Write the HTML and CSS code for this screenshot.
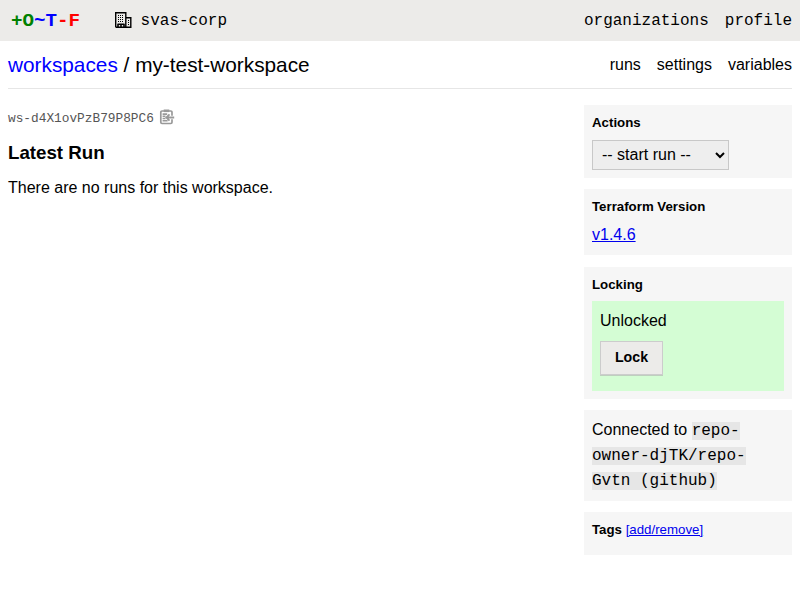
FILE: index.html
```html
<!DOCTYPE html>
<html lang="en">
<head>
<meta charset="utf-8">
<title>my-test-workspace</title>
<link rel="stylesheet" href="styles.css">
</head>
<body>
<header class="topbar">
  <a class="logo"><span class="green">+O</span><span class="blue">~T</span><span class="red">-F</span></a>
  <a class="org">
    <svg class="org-icon" width="17" height="16" viewBox="0 0 17 16" fill="none" stroke="#000">
      <path stroke-width="1.4" d="M.7 15.3V.7h10.1v14.6M11 5.7h4.8v9.6H.7"/>
      <path stroke-width="1.2" stroke-dasharray="1 1" d="M3 3.5h6M3 5.5h6M3 7.5h6M3 9.5h6M13 8.5h1M13 10.5h1M13 12.5h1"/>
      <path stroke-width="1.6" d="M2.5 12.3h7M3 12v3.5M6 12v3.5M9 12v3.5"/>
    </svg>
    <span>svas-corp</span>
  </a>
  <nav class="links"><a>organizations</a><a>profile</a></nav>
</header>
<div class="heading">
  <div class="crumbs"><a class="blue">workspaces</a> / my-test-workspace</div>
  <nav class="links"><a>runs</a><a>settings</a><a>variables</a></nav>
</div>
<div class="content">
  <main>
    <div class="identifier">
      <span>ws-d4X1ovPzB79P8PC6</span>
      <svg width="16" height="16" viewBox="0 0 16 16" fill="none" stroke="#999">
        <path stroke-width="1.7" d="M13 6.8V3.2Q13 2 11.8 2H3Q1.8 2 1.8 3.2v10.1q0 1.2 1.2 1.2h8.8q1.2 0 1.2-1.2v-3.1"/>
        <path stroke-width="2.6" d="M4.7 1.8h5.6"/>
        <path stroke-width="1.6" d="M3.6 5.1h4.6M3.6 7.3h2.9M3.6 9.5h2.9M3.6 11.7h5"/>
        <path stroke-width="1.8" d="M15.2 8.5H7.5M10.5 5.3L7.3 8.5l3.2 3.2"/>
      </svg>
    </div>
    <h3>Latest Run</h3>
    <p>There are no runs for this workspace.</p>
  </main>
  <aside class="sidebar">
    <section class="box actions">
      <h5>Actions</h5>
      <select><option>-- start run --</option></select>
    </section>
    <section class="box version">
      <h5>Terraform Version</h5>
      <a class="link" href="#">v1.4.6</a>
    </section>
    <section class="box locking">
      <h5>Locking</h5>
      <div class="lock">
        <div>Unlocked</div>
        <button>Lock</button>
      </div>
    </section>
    <section class="box repo">Connected to <span class="code">repo-owner-djTK/repo-Gvtn (github)</span></section>
    <section class="box tags"><h5>Tags <a class="link" href="#">[add/remove]</a></h5></section>
  </aside>
</div>
</body>
</html>
```
FILE: styles.css
```css
* { box-sizing: border-box; }
body {
  margin: 0;
  font: 16px/18px "Liberation Sans", Arial, sans-serif;
  color: #000;
  background: #fff;
}
.topbar {
  display: flex;
  align-items: center;
  height: 41px;
  padding: 0 8px 0 11px;
  background: #ecebe9;
  font-family: "Liberation Mono", monospace;
}
.logo { font-size: 19.2px; font-weight: bold; }
.green { color: #008000; }
.blue { color: #00f; }
.red { color: #f00; }
.org { display: flex; align-items: center; gap: 8.5px; margin-left: 35px; }
.org-icon { display: block; margin-top: -2px; }
.links { display: flex; gap: 16px; margin-left: auto; }
.heading {
  display: flex;
  align-items: center;
  height: 48px;
  margin: 0 8px;
  border-bottom: 1px solid #e6e6e6;
}
.crumbs { font-size: 20.8px; line-height: 24px; }
.content {
  display: grid;
  grid-template-columns: 1fr 208px;
  gap: 16px;
  padding: 16px 8px 0;
}
.identifier {
  display: flex;
  align-items: center;
  gap: 4.6px;
  height: 26px;
  color: #555;
  font: 12.8px/16px "Liberation Mono", monospace;
}
.identifier span { padding-top: 2px; }
.identifier svg { margin-top: -2px; }
h3 { margin: 11px 0 15px; font-size: 18.72px; line-height: 22px; }
p { margin: 0; }
.sidebar { display: flex; flex-direction: column; gap: 11px; }
.box { padding: 8px; background: #f6f6f6; }
h5 { margin: 2px 0 9px; font-size: 13.28px; line-height: 16px; }
.link { color: #00e; text-decoration: underline; }
h5 .link { font-weight: normal; }
.actions { height: 73px; }
select {
  display: block;
  width: 137px;
  height: 30px;
  padding: 0 0 2px 5px;
  border: 1px solid #c8c8c8;
  border-radius: 0;
  background-color: #eee;
  color: #000;
  font: 16px "Liberation Sans", Arial, sans-serif;
}
.version { height: 66px; margin-bottom: 1px; }
.version h5 { margin-bottom: 11px; }
.locking { height: 132px; }
.locking h5 { margin-bottom: 8px; }
.lock { height: 90px; padding: 11px 8px; background: #d4fdd4; }
button {
  display: block;
  width: 63px;
  height: 34px;
  margin-top: 11px;
  padding: 0 0 2px;
  border: 1px solid #ccc;
  border-radius: 0;
  background: #ecebe9;
  box-shadow: 0 1px 0 #becfbe;
  color: #000;
  font: bold 14.2px "Liberation Sans", Arial, sans-serif;
}
.repo { height: 91px; padding-top: 7px; line-height: 25px; }
.code { background: #e6e6e6; font-family: "Liberation Mono", monospace; line-height: 16px; }
.tags { height: 43px; }
```
